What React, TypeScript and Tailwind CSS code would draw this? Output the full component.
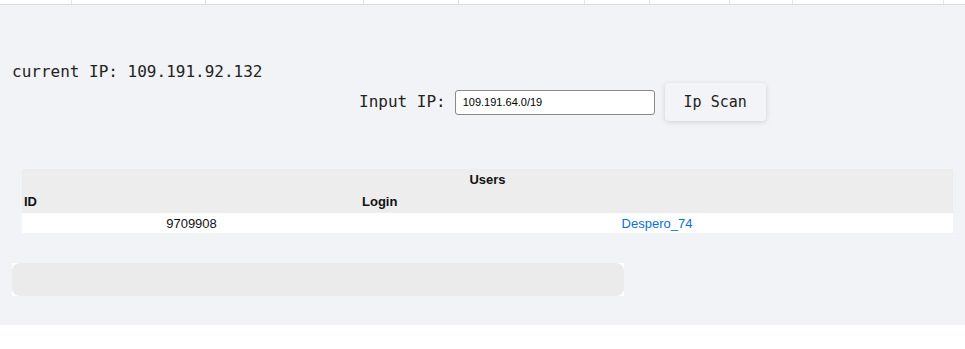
const mono = "font-['DejaVu_Sans_Mono','Liberation_Mono',monospace]";
const sans = "font-['Liberation_Sans',Arial,sans-serif]";

const topCells = [72, 134, 158, 95, 126, 65, 80, 63, 151];

export default function App() {
  return (
    <div className="w-[965px] h-[349px] bg-white overflow-hidden">
      {/* clipped header strip */}
      <div className="flex h-[5px] border-b border-[#dcdde0] bg-white">
        {topCells.map((w, i) => (
          <div key={i} style={{ width: w }} className="h-full border-r border-[#e2e3e6] shrink-0" />
        ))}
      </div>

      <div className="h-[320px] bg-[#f2f3f7] pt-[57px]">
        <p className={`${mono} text-[16px] leading-[20px] h-[20px] text-[#222] pl-[12px]`}>
          current IP: 109.191.92.132
        </p>

        <div className="flex items-center h-[38px] mt-[1px] pl-[359px]">
          <label className={`${mono} text-[16px] leading-[20px] text-[#222]`}>Input IP:</label>
          <input
            defaultValue="109.191.64.0/19"
            className={`${sans} ml-[9px] w-[200px] h-[25px] bg-white border border-[#8a8a8a] rounded-[3px] pl-[7px] text-[11px] text-black outline-none`}
          />
          <button
            className={`${mono} ml-[10px] w-[101px] h-[38px] rounded-[4px] bg-[#f3f4f8] text-[15px] text-[#222] shadow-[0_1px_5px_rgba(0,0,0,0.15)]`}
          >
            Ip Scan
          </button>
        </div>

        <table className={`${sans} mt-[48px] ml-[22px] w-[931px] border-collapse text-[13px] leading-[15px] text-[#111]`}>
          <thead className="bg-[#ededed]">
            <tr className="h-[21px]">
              <th colSpan={2} className="font-bold text-center p-0">Users</th>
            </tr>
            <tr className="h-[23px]">
              <th className="font-bold text-left p-0 pl-[2px] w-[339px]">ID</th>
              <th className="font-bold text-left p-0 pl-[1px]">Login</th>
            </tr>
          </thead>
          <tbody className="bg-white">
            <tr className="h-[20px]">
              <td className="text-center p-0">9709908</td>
              <td className="text-center p-0 text-[#0b6fd6]">Despero_74</td>
            </tr>
          </tbody>
        </table>

        <div className="mt-[30px] ml-[12px] w-[612px] h-[33px] bg-white">
          <div className="w-full h-full rounded-[8px] bg-[#ebebeb]" />
        </div>
      </div>
    </div>
  );
}
